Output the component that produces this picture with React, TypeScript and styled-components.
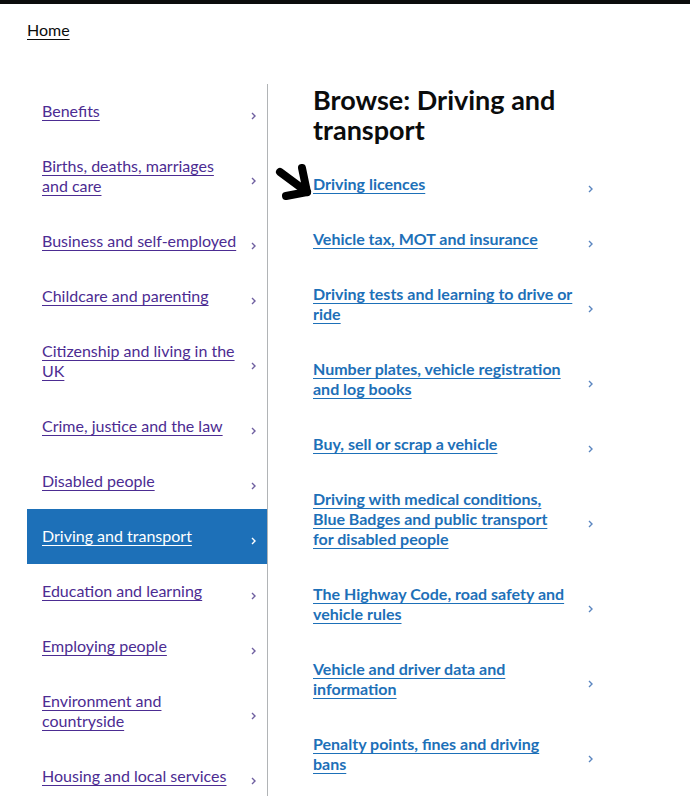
import React from 'react';
import styled, { createGlobalStyle } from 'styled-components';

const GlobalStyle = createGlobalStyle`
  body {
    margin: 0;
    background: #ffffff;
    font-family: Lato, "Noto Sans", Arial, sans-serif;
    color: #0b0c0c;
  }
`;

const TopBar = styled.div`
  height: 4px;
  background: #0b0c0c;
`;

const Page = styled.div`
  position: relative;
  padding: 0 0 0 27px;
`;

const Breadcrumb = styled.a`
  display: inline-block;
  margin-top: 16px;
  font-size: 16px;
  line-height: 20px;
  color: #0b0c0c;
  text-decoration: underline;
  text-underline-offset: 3px;
  text-decoration-thickness: 1px;
`;

const Layout = styled.div`
  display: flex;
  margin-top: 44px;
`;

const Nav = styled.ul`
  list-style: none;
  margin: 0;
  padding: 0;
  width: 240px;
  min-height: 720px;
  border-right: 1px solid #b1b4b6;
`;

const NavItem = styled.li<{ $active?: boolean }>`
  display: flex;
  align-items: center;
  justify-content: space-between;
  padding: 17px 11px 18px 15px;
  background: ${(p) => (p.$active ? '#1d70b8' : 'transparent')};
`;

const NavLink = styled.a<{ $active?: boolean }>`
  width: 196px;
  font-size: 16px;
  line-height: 20px;
  color: ${(p) => (p.$active ? '#ffffff' : '#4c2c92')};
  text-decoration: underline;
  text-underline-offset: 3px;
  text-decoration-thickness: 1px;
`;

const Content = styled.section`
  padding-left: 45px;
  width: 280px;
`;

const Heading = styled.h1`
  margin: 1px 0 0;
  font-size: 27px;
  line-height: 30px;
  font-weight: 700;
  color: #0b0c0c;
`;

const TopicList = styled.ul`
  list-style: none;
  margin: 12px 0 0;
  padding: 0;
`;

const TopicItem = styled.li`
  display: flex;
  align-items: center;
  justify-content: space-between;
  padding: 17px 0 18px;
`;

const TopicLink = styled.a`
  width: 262px;
  font-size: 16px;
  line-height: 20px;
  font-weight: 700;
  color: #1d70b8;
  text-decoration: underline;
  text-underline-offset: 3px;
  text-decoration-thickness: 1px;
  white-space: pre-line;
`;

const ChevronIcon = styled.svg`
  flex: 0 0 auto;
  margin-top: 10px;
`;

const Pointer = styled.svg`
  position: absolute;
  left: 271px;
  top: 155px;
`;

const Chevron = ({ color }: { color: string }) => (
  <ChevronIcon width="5" height="8" viewBox="0 0 5 8">
    <polyline points="1,1 4,4 1,7" fill="none" stroke={color} strokeWidth="1.4" />
  </ChevronIcon>
);

const navItems = [
  'Benefits',
  'Births, deaths, marriages and care',
  'Business and self-employed',
  'Childcare and parenting',
  'Citizenship and living in the UK',
  'Crime, justice and the law',
  'Disabled people',
  'Driving and transport',
  'Education and learning',
  'Employing people',
  'Environment and countryside',
  'Housing and local services',
];

const topics = [
  'Driving licences',
  'Vehicle tax, MOT and insurance',
  'Driving tests and learning to drive or ride',
  'Number plates, vehicle registration and log books',
  'Buy, sell or scrap a vehicle',
  'Driving with medical conditions, Blue Badges and public transport\nfor disabled people',
  'The Highway Code, road safety and vehicle rules',
  'Vehicle and driver data and information',
  'Penalty points, fines and driving bans',
];

const ACTIVE = 'Driving and transport';

export default function App() {
  return (
    <>
      <GlobalStyle />
      <TopBar />
      <Page>
        <Breadcrumb href="#">Home</Breadcrumb>
        <Layout>
          <Nav>
            {navItems.map((label) => {
              const active = label === ACTIVE;
              return (
                <NavItem key={label} $active={active}>
                  <NavLink href="#" $active={active}>
                    {label}
                  </NavLink>
                  <Chevron color={active ? '#ffffff' : '#6f5fa0'} />
                </NavItem>
              );
            })}
          </Nav>
          <Content>
            <Heading>Browse: Driving and transport</Heading>
            <TopicList>
              {topics.map((t) => (
                <TopicItem key={t}>
                  <TopicLink href="#">{t}</TopicLink>
                  <Chevron color="#5b86c0" />
                </TopicItem>
              ))}
            </TopicList>
          </Content>
        </Layout>
        {/* hand-drawn annotation arrow */}
        <Pointer width="46" height="46" viewBox="0 0 46 46">
          <g fill="none" stroke="#000" strokeWidth="8" strokeLinecap="round" strokeLinejoin="round">
            <line x1="9" y1="13" x2="36" y2="33" />
            <polyline points="31,9 36,33 15,37" />
          </g>
        </Pointer>
      </Page>
    </>
  );
}
